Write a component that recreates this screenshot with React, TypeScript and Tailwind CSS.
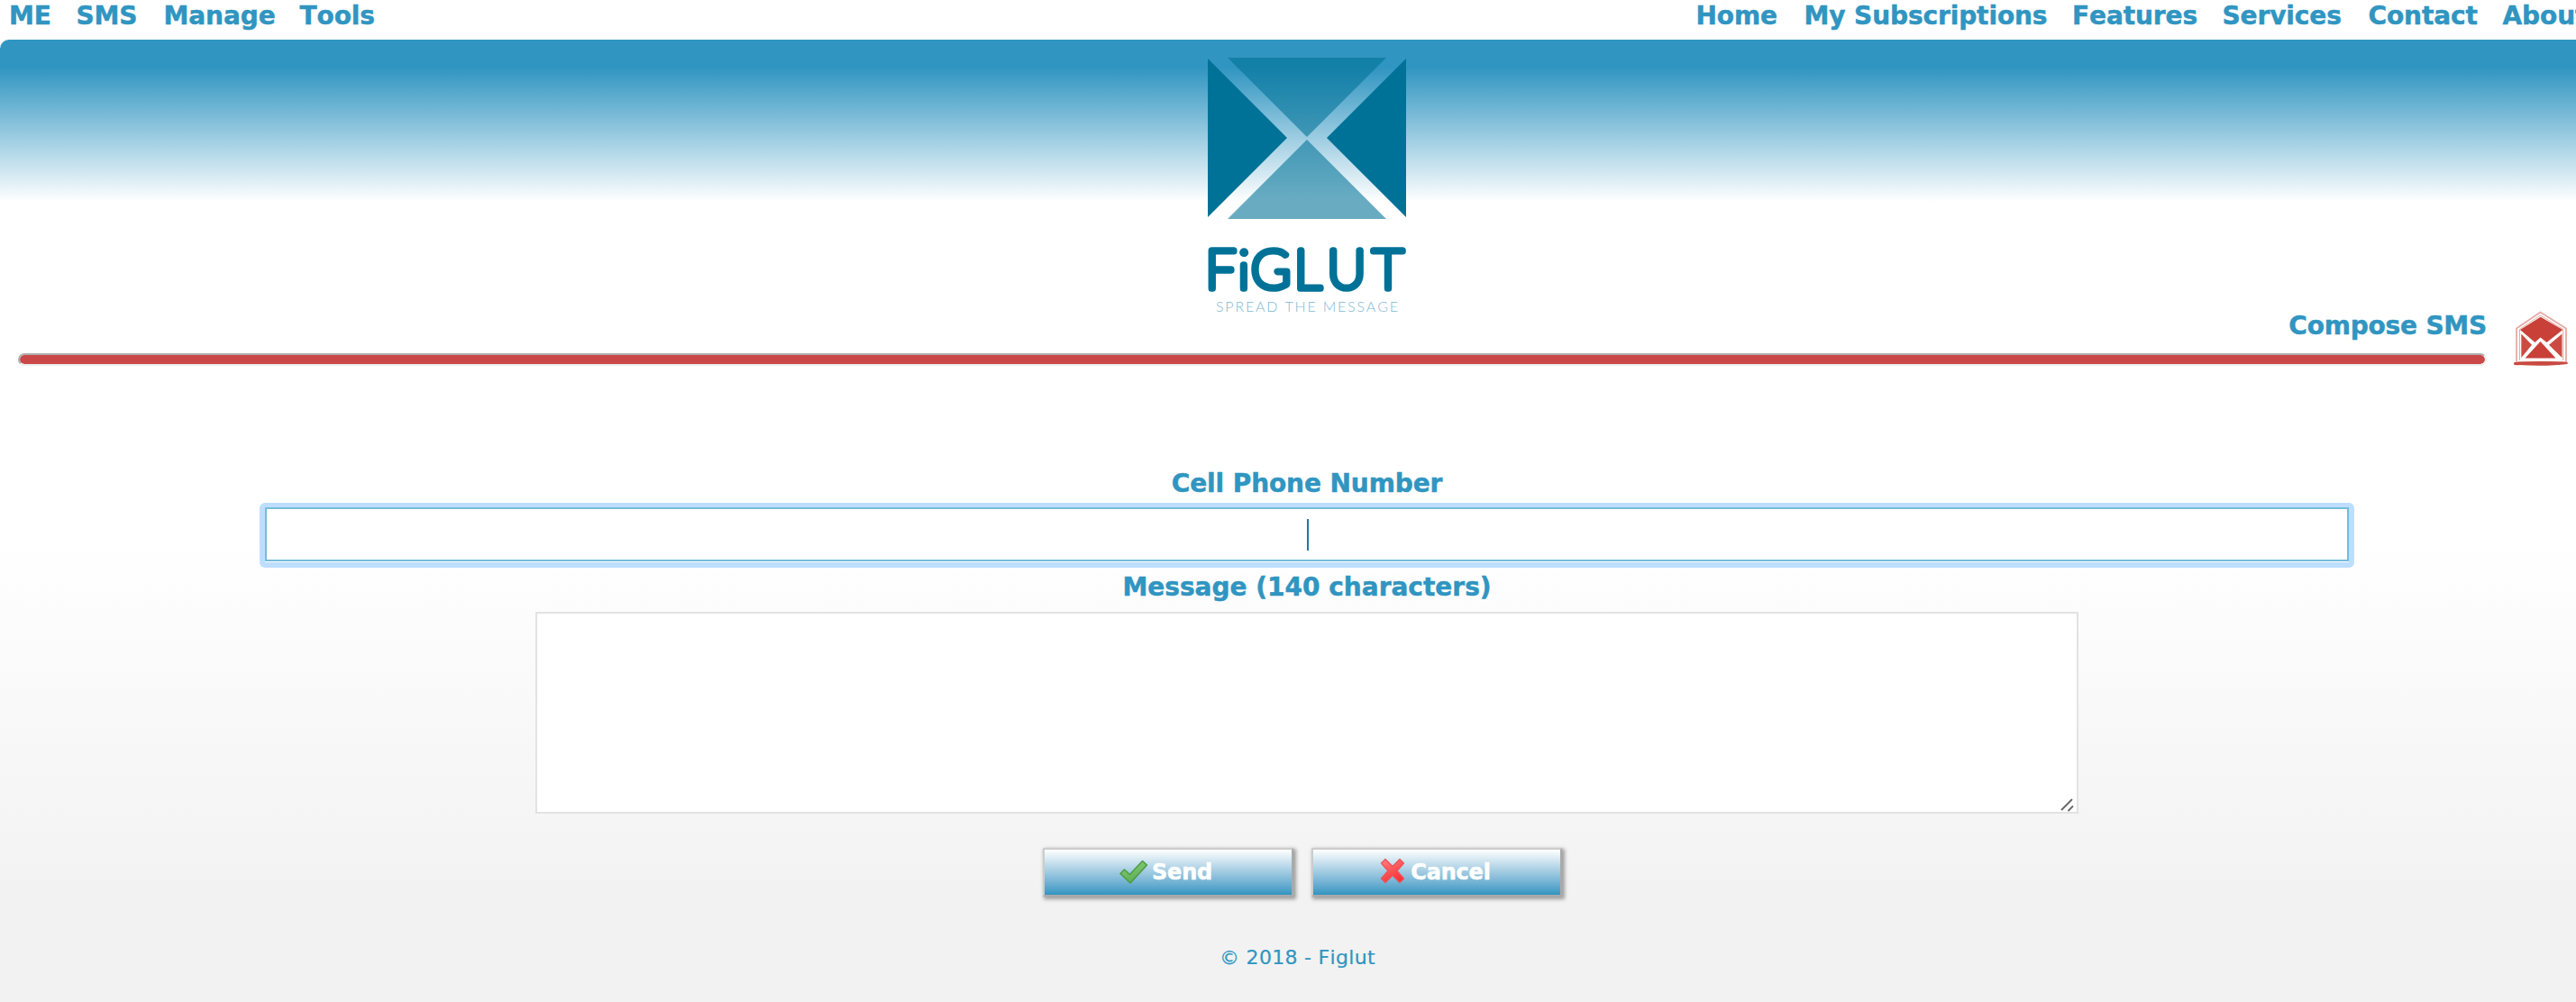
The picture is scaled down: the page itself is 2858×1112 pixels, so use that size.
import React from "react";

const LEFT = [
  { label: "ME", cls: "w-[74.5px]" },
  { label: "SMS", cls: "w-[97px]" },
  { label: "Manage", cls: "w-[151px]" },
  { label: "Tools", cls: "w-[110px]" },
];

const RIGHT = [
  { label: "Home", cls: "w-[120px]" },
  { label: "My Subscriptions", cls: "w-[297.5px]" },
  { label: "Features", cls: "w-[166.5px]" },
  { label: "Services", cls: "w-[162px]" },
  { label: "Contact", cls: "w-[149px]" },
  { label: "About", cls: "w-[110px]" },
];

function Logo() {
  return (
    <svg className="block h-[306px] w-[220px] shrink-0 overflow-visible" viewBox="0 0 220 306">
      <g fill="#007297">
        <path d="M0 21 L88 109 L0 197Z" />
        <path d="M220 21 L132 109 L220 197Z" />
        <path d="M22 20H198L110 108Z" opacity=".59" />
        <path d="M22 199H198L110 111Z" opacity=".59" />
      </g>
      <g
        fontFamily="Lato, sans-serif"
        fontWeight="100"
        fill="#007297"
        stroke="#007297"
        strokeWidth="7.7"
        strokeLinejoin="round"
        strokeLinecap="round"
      >
        <text fontSize="59.5" x="-2.5" y="276.3">F</text>
        <text fontSize="52" x="34.5" y="276.3">ı</text>
        <text fontSize="59.500" x="48 96 132.5 183" y="276.3">GLUT</text>
      </g>
      <circle cx="40.200" cy="236.300" r="5" fill="#007297" />
      <text
        x="9"
        y="301.5"
        fontFamily="Lato, sans-serif"
        fontWeight="300"
        fontSize="16"
        fill="#7fb9cf"
        textLength="202"
      >
        SPREAD THE MESSAGE
      </text>
    </svg>
  );
}

function EnvelopeIcon() {
  return (
    <svg className="block h-[64px] w-[64px] overflow-visible" viewBox="0 0 64 64">
      <path d="M5 56 V18.500 L31.500 0.500 L60 18.500 V56Z" fill="#fff" stroke="#e6aaa5" strokeWidth="1.800" strokeLinejoin="round" />
      <path d="M8.500 54 V19.500 L31.500 4 L56.800 19.500 V54" fill="none" stroke="#e6aaa5" strokeWidth="1" />
      <path d="M9 20 L31.700 5.700 L56.300 20 L38.500 34 L31.500 28.500 L25.500 34Z" fill="#c94038" />
      <path d="M10.300 24.500 L22 36.700 L10.300 51Z" fill="#cb4a42" />
      <path d="M55.500 24.500 L41 36.700 L55.500 51Z" fill="#cb4a42" />
      <path d="M14.500 51.500 L31.500 33 L48.500 51.500Z" fill="#c94038" />
      <path d="M3 57 Q32 55 61 57 Q40 60 3 58Z" fill="#c94a42" stroke="#c94a42" strokeWidth="1.800" strokeLinejoin="round" />
    </svg>
  );
}

function CheckIcon() {
  return (
    <svg className="block h-[32px] w-[32px]" viewBox="0 0 32 32">
      <defs>
        <linearGradient id="check" x1="0" y1="0" x2="0.3" y2="1">
          <stop offset="0" stopColor="#86d07a" />
          <stop offset="1" stopColor="#5fae54" />
        </linearGradient>
      </defs>
      <path d="M1 17.500 L5.500 13 L11.500 18.500 L25.500 3.500 L30.500 8 L12 28Z" fill="url(#check)" stroke="#4f9a45" strokeWidth="1.500" strokeLinejoin="round" />
    </svg>
  );
}

function CrossIcon() {
  return (
    <svg className="block h-[32px] w-[32px]" viewBox="0 0 32 32">
      <defs>
        <linearGradient id="cross" x1="0" y1="0" x2="0.5" y2="1">
          <stop offset="0" stopColor="#ff8080" />
          <stop offset="1" stopColor="#fa3338" />
        </linearGradient>
      </defs>
      <path d="M3.500 6 L8 1.500 L16 9.500 L24 1.500 L28.500 6 L21 14.500 L28.500 23 L24 27.500 L16 19.500 L8 27.500 L3.500 23 L11 14.500Z" fill="url(#cross)" stroke="#ee5054" strokeWidth="1.200" strokeLinejoin="round" />
    </svg>
  );
}

function Button({ icon, label }: { icon: React.ReactNode; label: string }) {
  return (
    <button className="flex h-[54px] w-[278px] items-center justify-center gap-[4px] border-2 border-t-[#ccc] border-r-[#aaa] border-b-[#aaa] border-l-[#ccc] bg-linear-to-b from-white to-[#3095c1] pr-[5px] text-[24px] font-bold leading-none tracking-[-0.2px] text-white shadow-[2px_2px_4px_1px_rgba(0,0,0,0.35)] [-webkit-text-stroke:0.5px]">
      {icon}
      <span>{label}</span>
    </button>
  );
}

export default function App() {
  return (
    <div className="flex h-[1112px] w-[2858px] flex-col overflow-hidden bg-[linear-gradient(to_bottom,#ffffff_600px,#f2f2f2_1000px)] font-['Verdana','DejaVu_Sans',sans-serif] text-[#3095c1] [font-kerning:none]">
      <nav className="flex h-[44px] shrink-0 justify-between overflow-hidden whitespace-nowrap text-[28px] font-bold leading-[36px] tracking-[-0.1px] [-webkit-text-stroke:0.5px]">
        <div className="flex pl-[10px]">
          {LEFT.map((i) => (
            <a key={i.label} className={i.cls}>{i.label}</a>
          ))}
        </div>
        <div className="flex w-[976.5px] overflow-hidden">
          {RIGHT.map((i) => (
            <a key={i.label} className={`shrink-0 ${i.cls}`}>{i.label}</a>
          ))}
        </div>
      </nav>

      <header className="flex h-[302px] shrink-0 justify-center rounded-tl-[10px] bg-[linear-gradient(to_bottom,#3095c1_31px,#ffffff_180px)] pl-[42px]">
        <Logo />
      </header>

      <div className="flex h-[64px] shrink-0 pl-[20px]">
        <div className="flex w-[2739px] flex-col">
          <h1 className="h-[46px] text-right text-[28px] font-bold leading-[32px] tracking-[-0.2px] [-webkit-text-stroke:0.5px]">Compose SMS</h1>
          <div className="h-[14px] rounded-[7px] border-2 border-t-[#b0b0b0] border-r-[#eee] border-b-[#eee] border-l-[#b0b0b0] bg-[#cb4848] bg-clip-padding" />
        </div>
        <div className="pl-[28px]">
          <EnvelopeIcon />
        </div>
      </div>

      <main className="flex flex-col items-center pt-[109px] pl-[42px]">
        <label className="h-[39px] text-[28px] font-bold leading-[36px] tracking-[-0.1px] [-webkit-text-stroke:0.5px]">Cell Phone Number</label>
        <div className="h-[72px] w-[2324px] rounded-[6px] bg-[#bddeff] px-[6px] pt-[5px]">
          <div className="flex h-[60px] justify-center border-2 border-[#76bcdb] bg-white pt-[11px] shadow-[0_1px_0_#fff]">
            <span className="ml-[2px] h-[35px] w-[2px] bg-[#25789f]" />
          </div>
        </div>
        <label className="mt-[4px] h-[45px] text-[28px] font-bold leading-[36px] [-webkit-text-stroke:0.5px]">Message (140 characters)</label>
        <div className="flex h-[224px] w-[1712px] items-end justify-end border-2 border-[#e2e2e2] bg-white">
          <svg className="block h-[18px] w-[20px]" viewBox="0 0 20 18">
            <path d="M3 16 L15 4 M10.500 17 L16 11.500" stroke="#666" strokeWidth="1.800" />
          </svg>
        </div>
      </main>

      <div className="mt-[38px] flex shrink-0 gap-[20px] pl-[1157px]">
        <Button icon={<CheckIcon />} label="Send" />
        <Button icon={<CrossIcon />} label="Cancel" />
      </div>

      <footer className="mt-[53px] pl-[1353px] text-[22px] leading-[30px] tracking-[0.3px] [-webkit-text-stroke:0.2px]">© 2018 - Figlut</footer>
    </div>
  );
}
